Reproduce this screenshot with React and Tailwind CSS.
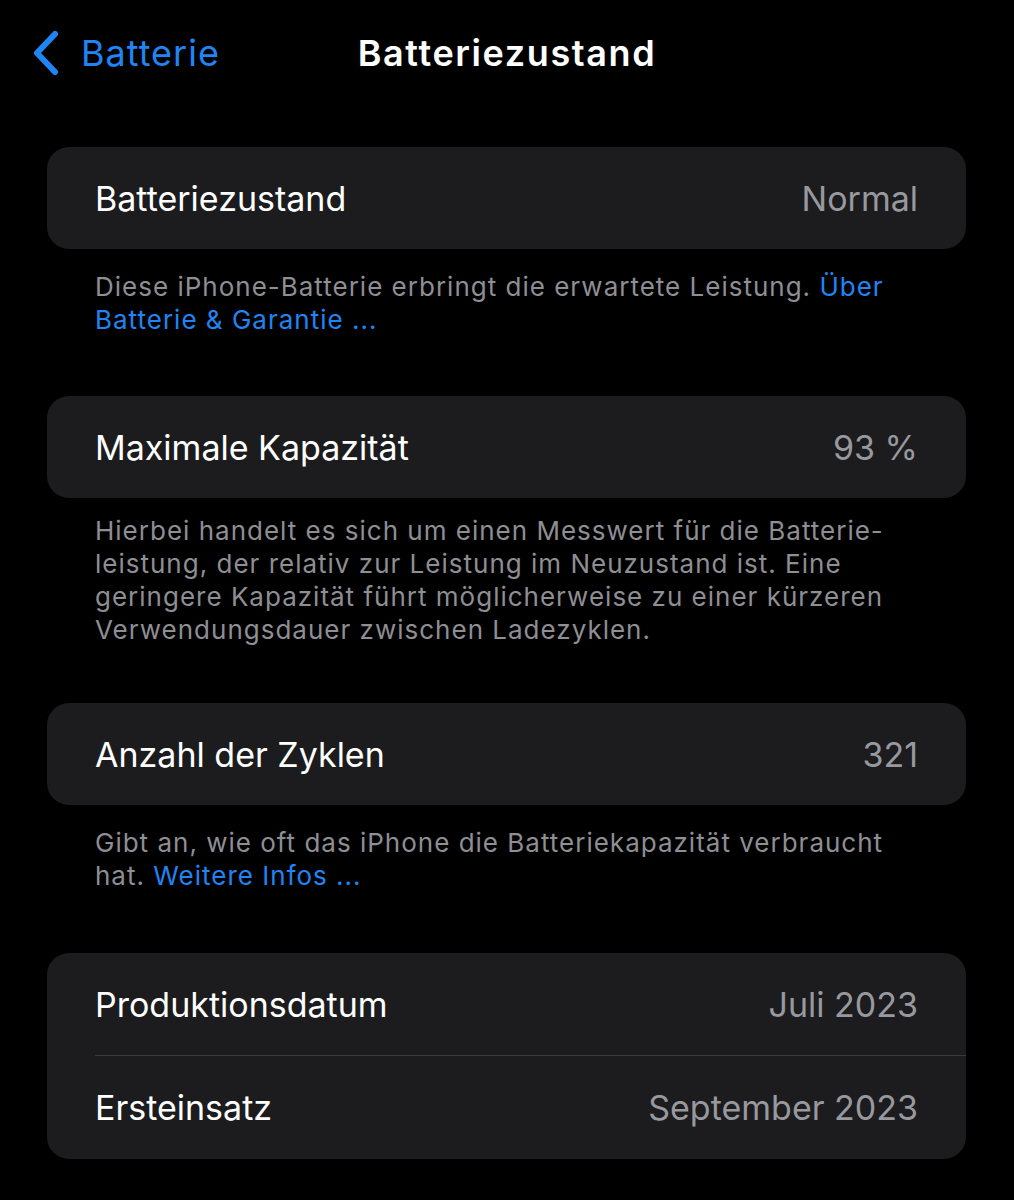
import React from 'react'

const Row = ({ label, value, divider, tall }) => (
  <div className={`relative flex items-center justify-between px-[48px] ${tall ? 'h-[103px]' : 'h-[102px]'}`}>
    <span className="text-[34px] text-white">{label}</span>
    <span className="text-[34px] text-[#98989f]">{value}</span>
    {divider && <div className="absolute bottom-0 left-[48px] right-0 h-px bg-[#3a3a3c]" />}
  </div>
)

const Footer = ({ lines, className }) => (
  <div className={`px-[48px] text-[26px] leading-[33px] tracking-[1px] text-[#8e8e93] ${className}`}>
    {lines.map((line, i) => (
      <div key={i} className="whitespace-nowrap">
        {line}
      </div>
    ))}
  </div>
)

const Link = ({ children }) => <span className="text-[#1f85f5]">{children}</span>

const App = () => {
  return (
    <div className="min-h-[1200px] bg-black font-['Inter',sans-serif] antialiased">
      <div className="relative flex h-[105px] items-center justify-center">
        <div className="absolute left-[33px] top-0 flex h-full items-center gap-[22px]">
          <svg width="26" height="46" viewBox="0 0 26 46" fill="none">
            <path d="M22 4 L4 23 L22 42" stroke="#1f85f5" strokeWidth="6" strokeLinecap="round" strokeLinejoin="round" />
          </svg>
          <span className="text-[36px] tracking-[1px] text-[#1f85f5]">Batterie</span>
        </div>
        <h1 className="text-[36px] font-semibold tracking-[1.6px] text-white">Batteriezustand</h1>
      </div>

      <div className="px-[47px] pr-[48px] pt-[42px]">
        <div className="overflow-hidden rounded-[22px] bg-[#1c1c1e]">
          <Row label="Batteriezustand" value="Normal" />
        </div>
      </div>
      <Footer
        className="ml-[47px] mt-[21px]"
        lines={[
          <>Diese iPhone-Batterie erbringt die erwartete Leistung. <Link>Über</Link></>,
          <Link>Batterie &amp; Garantie ...</Link>,
        ]}
      />

      <div className="px-[47px] pr-[48px] pt-[60px]">
        <div className="overflow-hidden rounded-[22px] bg-[#1c1c1e]">
          <Row label="Maximale Kapazität" value="93 %" />
        </div>
      </div>
      <Footer
        className="ml-[47px] mt-[16px]"
        lines={[
          'Hierbei handelt es sich um einen Messwert für die Batterie-',
          'leistung, der relativ zur Leistung im Neuzustand ist. Eine',
          'geringere Kapazität führt möglicherweise zu einer kürzeren',
          'Verwendungsdauer zwischen Ladezyklen.',
        ]}
      />

      <div className="px-[47px] pr-[48px] pt-[57px]">
        <div className="overflow-hidden rounded-[22px] bg-[#1c1c1e]">
          <Row label="Anzahl der Zyklen" value="321" />
        </div>
      </div>
      <Footer
        className="ml-[47px] mt-[21px]"
        lines={[
          'Gibt an, wie oft das iPhone die Batteriekapazität verbraucht',
          <>hat. <Link>Weitere Infos ...</Link></>,
        ]}
      />

      <div className="px-[47px] pr-[48px] pt-[61px]">
        <div className="overflow-hidden rounded-[22px] bg-[#1c1c1e]">
          <Row label="Produktionsdatum" value="Juli 2023" divider tall />
          <Row label="Ersteinsatz" value="September 2023" tall />
        </div>
      </div>
    </div>
  )
}

export default App
